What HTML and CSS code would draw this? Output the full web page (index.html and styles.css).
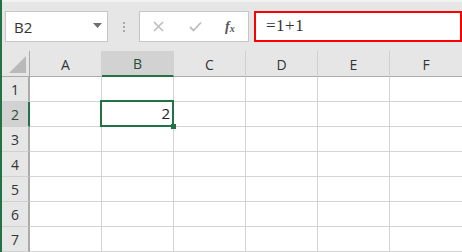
FILE: index.html
```html
<!DOCTYPE html>
<html>
<head>
<meta charset="utf-8">
<link rel="stylesheet" href="styles.css">
</head>
<body>
<div class="app">
  <div class="toolbar">
    <div class="namebox">
      <span class="name">B2</span>
      <svg class="dd" width="9" height="5" viewBox="0 0 9 5"><path d="M0 0H9L4.5 5Z" fill="#6f6f6f"/></svg>
    </div>
    <div class="grip"><i></i><i></i><i></i></div>
    <div class="buttons">
      <svg class="btn x" width="11" height="11" viewBox="0 0 11 11"><path d="M1 1L10 10M10 1L1 10" stroke="#bdbdbd" stroke-width="1.6" fill="none"/></svg>
      <svg class="btn ok" width="13" height="11" viewBox="0 0 13 11"><path d="M1 6L4.5 9.5L12 1.5" stroke="#bdbdbd" stroke-width="1.8" fill="none"/></svg>
      <span class="fx">f<sub>x</sub></span>
    </div>
    <div class="formula">=1+1</div>
  </div>
  <div class="sheet">
    <div class="corner"><span class="tri"></span></div>
    <div class="ch">A</div>
    <div class="ch sel">B</div>
    <div class="ch">C</div>
    <div class="ch">D</div>
    <div class="ch">E</div>
    <div class="ch last">F</div>

    <div class="rh">1</div><div class="c"></div><div class="c"></div><div class="c"></div><div class="c"></div><div class="c"></div><div class="c last"></div>
    <div class="rh sel">2</div><div class="c"></div><div class="c active"><span>2</span><i class="handle"></i></div><div class="c"></div><div class="c"></div><div class="c"></div><div class="c last"></div>
    <div class="rh">3</div><div class="c"></div><div class="c"></div><div class="c"></div><div class="c"></div><div class="c"></div><div class="c last"></div>
    <div class="rh">4</div><div class="c"></div><div class="c"></div><div class="c"></div><div class="c"></div><div class="c"></div><div class="c last"></div>
    <div class="rh">5</div><div class="c"></div><div class="c"></div><div class="c"></div><div class="c"></div><div class="c"></div><div class="c last"></div>
    <div class="rh">6</div><div class="c"></div><div class="c"></div><div class="c"></div><div class="c"></div><div class="c"></div><div class="c last"></div>
    <div class="rh">7</div><div class="c"></div><div class="c"></div><div class="c"></div><div class="c"></div><div class="c"></div><div class="c last"></div>
  </div>
</div>
</body>
</html>
```
FILE: styles.css
```css
* { box-sizing: border-box; }
html, body { margin: 0; padding: 0; }
body { width: 462px; height: 252px; overflow: hidden; background: #e6e6e6; font-family: "Open Sans", "Noto Sans", sans-serif; }
.app { border-left: 2px solid #217346; height: 252px; }
.toolbar {
  height: 51px; background: #e6e6e6; border-top: 2px solid #f2f2f2;
  display: flex; align-items: flex-start; padding-top: 9px;
}
.namebox {
  margin-left: 3px; width: 103px; height: 31px; background: #fff; border: 1px solid #c6c6c6;
  display: flex; align-items: center; justify-content: space-between; padding: 0 5px 0 8px;
}
.name { font-size: 15px; color: #333; font-family: "Open Sans", sans-serif; }
.dd { margin-top: -2px; }
.grip { width: 31px; height: 31px; display: flex; flex-direction: column; align-items: center; justify-content: center; gap: 2px; }
.grip i { display: block; width: 2px; height: 2px; background: #a8a8a8; }
.buttons {
  width: 110px; height: 31px; background: #fff; border: 1px solid #c6c6c6;
  display: flex; align-items: center; padding-left: 13px;
}
.btn.x { margin-right: 25px; }
.btn.ok { margin-right: 23px; }
.fx { font-family: "Liberation Serif", serif; font-style: italic; font-size: 14px; color: #555; font-weight: bold; }
.fx sub { font-size: 10px; vertical-align: -1px; }
.formula {
  margin-left: 5px; flex: 1; height: 31px; background: #fff; border: 2px solid #ff0000;
  font-family: "Liberation Serif", serif; font-size: 17px; color: #333; letter-spacing: 0.5px;
  padding-left: 10px; line-height: 26px;
}
.sheet {
  display: grid; grid-template-columns: 28px 72px 72px 72px 72px 72px 72px;
  grid-template-rows: 26px repeat(7, 25px); background: #fff;
}
.corner { background: #e6e6e6; border-right: 1px solid #ababab; border-bottom: 1px solid #ababab; position: relative; }
.tri { position: absolute; right: 3px; bottom: 3px; width: 0; height: 0; border-left: 17px solid transparent; border-bottom: 17px solid #b9b9b9; }
.ch {
  background: #e6e6e6; border-right: 1px solid #d0d0d0; border-bottom: 1px solid #ababab;
  display: flex; align-items: center; justify-content: center; font-size: 14px; color: #333; padding-top: 1px;
}
.ch.sel { background: #d2d2d2; border-bottom: 2px solid #217346; color: #264d36; }
.ch.last, .c.last { border-right: none; }
.rh {
  background: #e6e6e6; border-right: 2px solid #ababab; border-bottom: 1px solid #d0d0d0;
  display: flex; align-items: center; justify-content: center; font-size: 14px; color: #333;
}
.rh.sel { background: #d2d2d2; border-right-color: #217346; color: #264d36; }
.c { border-right: 1px solid #d4d4d4; border-bottom: 1px solid #d4d4d4; }
.c.active { position: relative; }
.c.active::before {
  content: ""; position: absolute; left: -2px; top: -2px; right: -1px; bottom: -1px; border: 2px solid #217346;
}
.c.active span { position: absolute; right: 3px; top: 1px; font-size: 15px; color: #222; }
.handle { position: absolute; right: -3px; bottom: -3px; width: 5px; height: 5px; background: #217346; }
```
